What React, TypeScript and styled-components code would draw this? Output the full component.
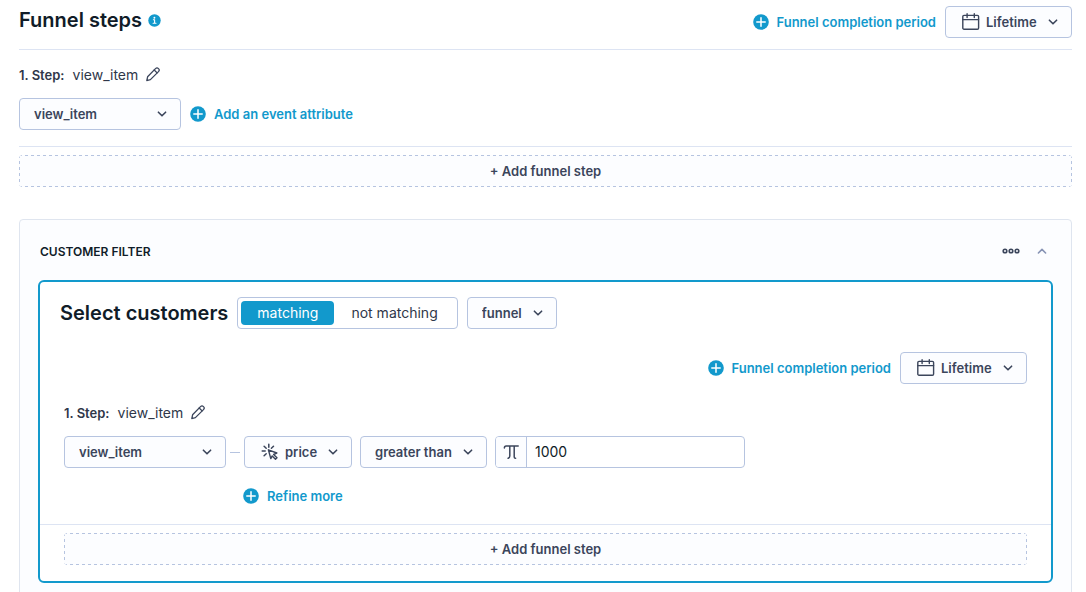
import React, { useId, useState } from "react";
import styled, { createGlobalStyle, css } from "styled-components";

const color = {
  ink: "#101c28",
  text: "#2f3749",
  control: "#3b455b",
  accent: "#1299cc",
  border: "#b6c4e0",
  line: "#dde4f3",
  panelLine: "#dfe5ef",
  surface: "#fcfdff",
  muted: "#8793b4",
};

const GlobalStyle = createGlobalStyle`
  *, *::before, *::after { box-sizing: border-box; }
  body {
    margin: 0;
    background: #fff;
    color: ${color.ink};
    font-family: Inter, "Liberation Sans", sans-serif;
    font-size: 13px;
    line-height: 20px;
  }
  button, input, select { font: inherit; color: inherit; }
`;

const Page = styled.main`
  padding: 6px 14px 0 19px;
`;

const PageHeader = styled.header`
  display: flex;
  justify-content: space-between;
  align-items: flex-start;
  padding-bottom: 11px;
  border-bottom: 1px solid ${color.line};
`;

const TitleGroup = styled.div`
  display: flex;
  align-items: center;
  gap: 6px;
`;

const Title = styled.h1`
  margin: 0;
  font-size: 20px;
  line-height: 28px;
  font-weight: 600;
`;

const FilterTitle = styled(Title).attrs({ as: "h3" })``;

const PeriodBar = styled.div`
  display: flex;
  justify-content: flex-end;
  align-items: center;
  gap: 9px;
`;

const IconButton = styled.button`
  display: inline-flex;
  align-items: center;
  justify-content: center;
  padding: 0;
  border: 0;
  background: none;
  cursor: pointer;
`;

const LinkButton = styled(IconButton)`
  gap: 8px;
  color: ${color.accent};
  font-weight: 600;
`;

const controlBox = css`
  height: 32px;
  border: 1px solid ${color.border};
  border-radius: 4px;
`;

const SelectBox = styled.div<{ $width: number }>`
  ${controlBox}
  display: grid;
  grid-template: 1fr / 1fr;
  align-items: center;
  flex: none;
  width: ${(p) => p.$width}px;
  background: ${color.surface};
  color: ${color.control};

  > * { grid-area: 1 / 1; }
`;

const NativeSelect = styled.select<{ $icon: boolean }>`
  appearance: none;
  width: 100%;
  height: 100%;
  padding: 0 32px 0 ${(p) => (p.$icon ? 40 : 14)}px;
  border: 0;
  border-radius: 4px;
  background: transparent;
  font-weight: 600;
  cursor: pointer;
`;

const SelectIcon = styled.span<{ $end?: boolean }>`
  display: flex;
  justify-self: ${(p) => (p.$end ? "end" : "start")};
  padding: 0 ${(p) => (p.$end ? 12 : 16)}px;
  pointer-events: none;
`;

const StepLabel = styled.div`
  display: flex;
  align-items: baseline;
  gap: 8px;
  margin-bottom: 13px;
  color: ${color.text};

  strong { font-weight: 600; }
  span { font-size: 14px; }
  button { align-self: center; color: ${color.control}; }
`;

const Step = styled.section`
  padding: 15px 0 16px;
  border-bottom: 1px solid ${color.line};
`;

const ControlRow = styled.div<{ $gap: number }>`
  display: flex;
  align-items: center;
  gap: ${(p) => p.$gap}px;
`;

const dash = (direction: string) =>
  `repeating-linear-gradient(${direction}, ${color.border} 0 3px, transparent 3px 6px)`;

const AddStep = styled.button`
  display: block;
  width: 100%;
  height: 32px;
  margin-top: 8px;
  padding: 0;
  border: 0;
  border-radius: 4px;
  background:
    ${dash("to right")} top / 100% 1px no-repeat,
    ${dash("to right")} bottom / 100% 1px no-repeat,
    ${dash("to bottom")} left / 1px 100% no-repeat,
    ${dash("to bottom")} right / 1px 100% no-repeat,
    ${color.surface};
  color: ${color.control};
  font-weight: 600;
  cursor: pointer;
`;

const Panel = styled.section`
  margin-top: 32px;
  padding: 0 18px 18px;
  border: 1px solid ${color.panelLine};
  border-radius: 4px;
  background: ${color.surface};
`;

const PanelHeader = styled.header`
  display: flex;
  align-items: center;
  justify-content: space-between;
  height: 60px;
  padding: 3px 5px 0 2px;

  h2 {
    margin: 0;
    font-size: 12px;
    font-weight: 600;
    text-transform: uppercase;
  }
`;

const PanelActions = styled.div`
  display: flex;
  align-items: center;
  gap: 16px;
  padding-bottom: 2px;
  color: ${color.control};
`;

const FilterCard = styled.div`
  padding-bottom: 16px;
  border: 2px solid ${color.accent};
  border-radius: 6px;
  background: #fff;
`;

const FilterHead = styled.div`
  display: flex;
  align-items: center;
  gap: 9px;
  padding: 15px 20px 23px;
`;

const FilterBody = styled.div`
  padding: 0 24px;
`;

const FilterStep = styled.section`
  padding: 19px 24px 18px;
  border-bottom: 1px solid ${color.line};
`;

const Toggle = styled.fieldset`
  ${controlBox}
  display: flex;
  gap: 1px;
  margin: 0;
  padding: 3px;
  background: #fff;
`;

const ToggleOption = styled.label`
  display: flex;
  align-items: center;
  justify-content: center;
  padding: 0 16px;
  border-radius: 4px;
  color: ${color.text};
  font-size: 14px;
  cursor: pointer;

  &:has(input:checked) {
    background: ${color.accent};
    color: #fff;
  }
  input {
    appearance: none;
    position: absolute;
    margin: 0;
  }
`;

const Connector = styled.span`
  flex: none;
  width: 10px;
  height: 1px;
  margin: 0 4px;
  background: ${color.border};
`;

const ConditionRow = styled(ControlRow)`
  margin-bottom: 18px;
`;

const Refine = styled.div`
  display: flex;
  padding-left: 179px;
`;

const ValueField = styled.div`
  ${controlBox}
  display: flex;
  flex: 0 1 250px;
  min-width: 0;
  background: #fff;
  overflow: hidden;
`;

const TypeButton = styled(IconButton)`
  flex: none;
  width: 31px;
  border-right: 1px solid ${color.border};
  background: ${color.surface};
  color: ${color.control};
`;

const ValueInput = styled.input`
  flex: 1;
  min-width: 0;
  padding: 0 8px;
  border: 0;
  background: transparent;
  color: ${color.ink};
  font-size: 14px;
`;

const Svg = styled.svg`
  display: block;
  flex: none;
  fill: none;
  stroke: currentColor;
  stroke-linecap: round;
  stroke-linejoin: round;
`;

const CollapseButton = styled(IconButton)`
  color: ${color.muted};
`;

const ChevronIcon = ({ up = false }: { up?: boolean }) => (
  <Svg width="12" height="12" viewBox="0 0 12 12" strokeWidth="1.6">
    <path d={up ? "M2.4 8 6 4.4 9.6 8" : "M2.4 4.2 6 7.8 9.6 4.2"} />
  </Svg>
);

const PlusIcon = () => (
  <Svg width="16" height="16" viewBox="0 0 16 16">
    <circle cx="8" cy="8" r="7.8" fill={color.accent} stroke="none" />
    <path d="M8 3.8v8.4M3.8 8h8.4" stroke="#fff" strokeWidth="1.5" />
  </Svg>
);

const InfoIcon = () => (
  <Svg width="13" height="13" viewBox="0 0 13 13">
    <circle cx="6.5" cy="6.5" r="6.2" fill={color.accent} stroke="none" />
    <circle cx="6.4" cy="3.7" r="0.95" fill="#fff" stroke="none" />
    <path d="M5.4 5.8h1.2v3.4M5.1 9.3h2.9" stroke="#fff" strokeWidth="1.1" />
  </Svg>
);

const PencilIcon = () => (
  <Svg width="14" height="16" viewBox="1 0 14 16" strokeWidth="1.3">
    <path d="M1.8 13.6 2.6 9.8 10.5 1.6a2.1 2.1 0 0 1 3 3L5.4 12.6z" />
    <path d="M9.2 3 12.1 5.9" />
  </Svg>
);

const CalendarIcon = () => (
  <Svg width="18" height="18" viewBox="0 0 18 18" strokeWidth="1.4">
    <rect x="0.8" y="2.4" width="15.8" height="13.8" rx="1.2" />
    <path d="M.8 6.6h15.8M5.1 .8v3.8M12.3 .8v3.8" />
  </Svg>
);

const EventIcon = () => (
  <Svg width="18" height="18" viewBox="0 0 18 18" strokeWidth="1.5">
    <path d="M7.8 1.2v3M3.1 3.2 5.2 5.3M1.2 8h3M3.1 12.8 5.2 10.7M12.5 3.2 10.4 5.3" />
    <path d="M7.4 6.8 15.8 10 12.6 11.5 16 14.8 14.5 16.3 11.2 12.9 9.8 15.6z" strokeWidth="1.4" />
  </Svg>
);

const PiIcon = () => (
  <Svg width="16" height="16" viewBox="0 0 16 16" strokeWidth="1.5">
    <path d="M1.4 4C1.4 2.6 1.9 1.9 3.2 1.9H15.2M6.8 1.9v10.2c0 1.3-.6 2-1.7 2.2M11.2 1.9v11c0 1 .4 1.4 1.4 1.4" />
  </Svg>
);

const MoreIcon = () => (
  <Svg width="18" height="8" viewBox="0 0 18 8" strokeWidth="1.6">
    <circle cx="3" cy="4" r="1.8" />
    <circle cx="9" cy="4" r="1.8" />
    <circle cx="15" cy="4" r="1.8" />
  </Svg>
);

type DropdownProps = { label: string; value: string; width: number; icon?: React.ReactNode };

const Dropdown = ({ label, value, width, icon }: DropdownProps) => (
  <SelectBox $width={width}>
    {icon && <SelectIcon>{icon}</SelectIcon>}
    <NativeSelect aria-label={label} $icon={Boolean(icon)} defaultValue={value}>
      <option>{value}</option>
    </NativeSelect>
    <SelectIcon $end>
      <ChevronIcon />
    </SelectIcon>
  </SelectBox>
);

const AddLink = ({ children }: { children: React.ReactNode }) => (
  <LinkButton type="button">
    <PlusIcon />
    {children}
  </LinkButton>
);

const CompletionPeriod = () => (
  <PeriodBar>
    <AddLink>Funnel completion period</AddLink>
    <Dropdown label="Period" value="Lifetime" width={127} icon={<CalendarIcon />} />
  </PeriodBar>
);

const StepName = () => (
  <StepLabel>
    <strong>1. Step:</strong>
    <span>view_item</span>
    <IconButton type="button" aria-label="Rename step">
      <PencilIcon />
    </IconButton>
  </StepLabel>
);

export default function App() {
  const group = useId();
  const [mode, setMode] = useState("matching");
  const [amount, setAmount] = useState("1000");

  return (
    <>
      <GlobalStyle />
      <Page>
        <PageHeader>
          <TitleGroup>
            <Title>Funnel steps</Title>
            <IconButton type="button" aria-label="About funnel steps">
              <InfoIcon />
            </IconButton>
          </TitleGroup>
          <CompletionPeriod />
        </PageHeader>

        <Step>
          <StepName />
          <ControlRow $gap={9}>
            <Dropdown label="Event" value="view_item" width={162} />
            <AddLink>Add an event attribute</AddLink>
          </ControlRow>
        </Step>
        <AddStep type="button">+ Add funnel step</AddStep>

        <Panel>
          <PanelHeader>
            <h2>Customer filter</h2>
            <PanelActions>
              <IconButton type="button" aria-label="More options">
                <MoreIcon />
              </IconButton>
              <CollapseButton type="button" aria-label="Collapse">
                <ChevronIcon up />
              </CollapseButton>
            </PanelActions>
          </PanelHeader>

          <FilterCard>
            <FilterHead>
              <FilterTitle>Select customers</FilterTitle>
              <Toggle aria-label="Match mode">
                {["matching", "not matching"].map((option) => (
                  <ToggleOption key={option}>
                    <input
                      type="radio"
                      name={group}
                      checked={mode === option}
                      onChange={() => setMode(option)}
                    />
                    {option}
                  </ToggleOption>
                ))}
              </Toggle>
              <Dropdown label="Filter type" value="funnel" width={90} />
            </FilterHead>
            <FilterBody>
              <CompletionPeriod />
            </FilterBody>
            <FilterStep>
              <StepName />
              <ConditionRow $gap={8}>
                <ControlRow $gap={0}>
                  <Dropdown label="Event" value="view_item" width={162} />
                  <Connector />
                  <Dropdown label="Attribute" value="price" width={108} icon={<EventIcon />} />
                </ControlRow>
                <Dropdown label="Operator" value="greater than" width={127} />
                <ValueField>
                  <TypeButton type="button" aria-label="Value type">
                    <PiIcon />
                  </TypeButton>
                  <ValueInput
                    aria-label="Value"
                    value={amount}
                    onChange={(e) => setAmount(e.target.value)}
                  />
                </ValueField>
              </ConditionRow>
              <Refine>
                <AddLink>Refine more</AddLink>
              </Refine>
            </FilterStep>
            <FilterBody>
              <AddStep type="button">+ Add funnel step</AddStep>
            </FilterBody>
          </FilterCard>
        </Panel>
      </Page>
    </>
  );
}
